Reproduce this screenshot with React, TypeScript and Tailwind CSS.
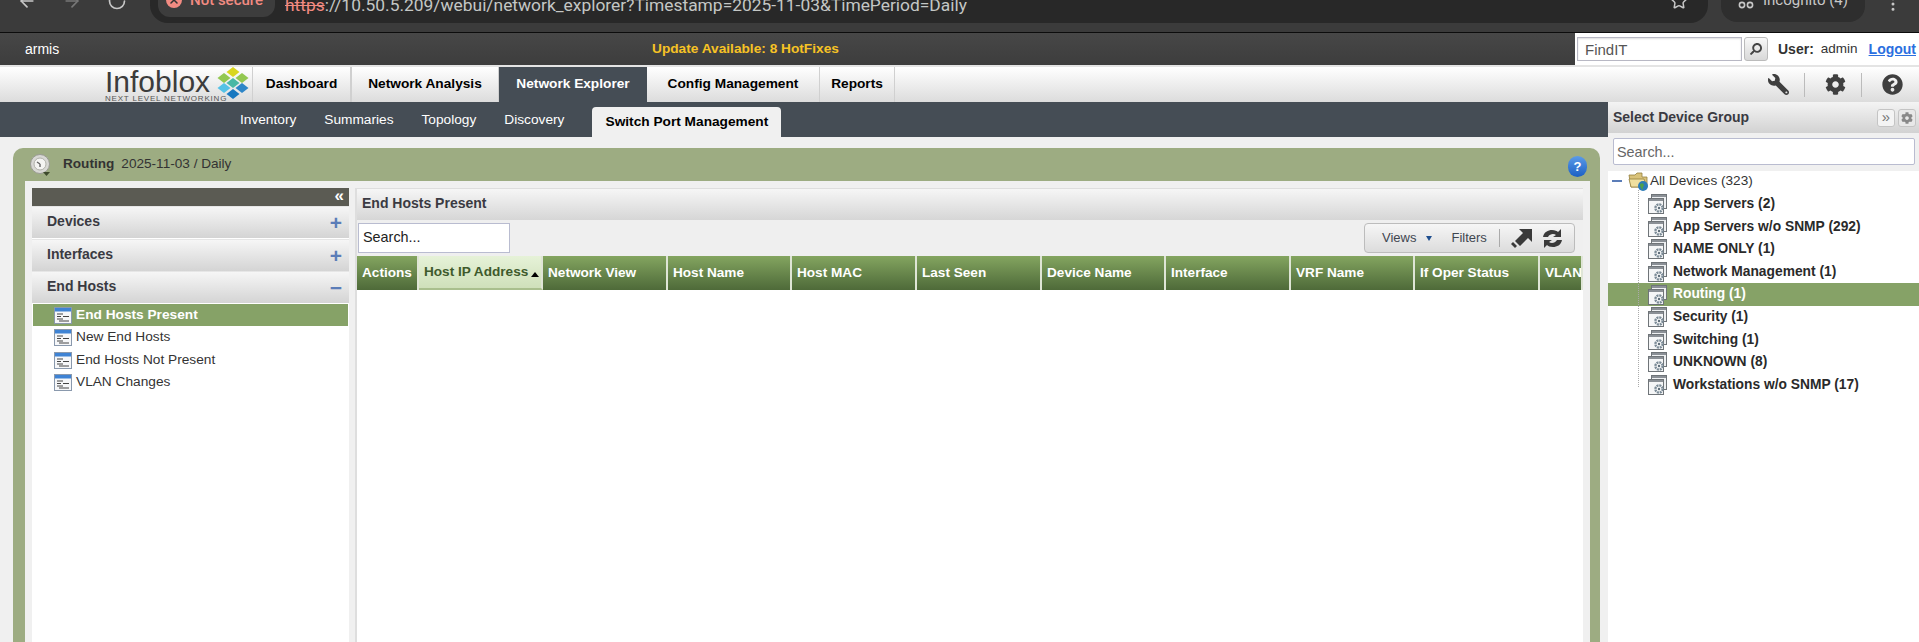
import { FaCog, FaQuestionCircle, FaSearch, FaWrench } from "react-icons/fa";
import { ArrowLeft, ArrowRight, EllipsisVertical, RotateCw, Star, X } from "lucide-react";

const navTabs = [
  { label: "Dashboard", width: "w-[99px]", border: true },
  { label: "Network Analysis", width: "w-[148px]", border: true },
  { label: "Network Explorer", width: "w-[148px]", active: true },
  { label: "Config Management", width: "w-[172px]" },
  { label: "Reports", width: "w-[76px]", border: true },
];

const subTabs = ["Inventory", "Summaries", "Topology", "Discovery"];

const columns = [
  { label: "Actions", width: "w-[62px]" },
  { label: "Host IP Address", width: "w-[124px]", sorted: true },
  { label: "Network View", width: "w-[125px]" },
  { label: "Host Name", width: "w-[124px]" },
  { label: "Host MAC", width: "w-[125px]" },
  { label: "Last Seen", width: "w-[125px]" },
  { label: "Device Name", width: "w-[124px]" },
  { label: "Interface", width: "w-[125px]" },
  { label: "VRF Name", width: "w-[124px]" },
  { label: "If Oper Status", width: "w-[125px]" },
  { label: "VLAN", width: "flex-1" },
];

const reports = ["End Hosts Present", "New End Hosts", "End Hosts Not Present", "VLAN Changes"];

const groups = [
  "App Servers (2)",
  "App Servers w/o SNMP (292)",
  "NAME ONLY (1)",
  "Network Management (1)",
  "Routing (1)",
  "Security (1)",
  "Switching (1)",
  "UNKNOWN (8)",
  "Workstations w/o SNMP (17)",
];

function Logo() {
  return (
    <div className="flex w-[148px] pl-[1px] h-full shrink-0">
      <div className="flex flex-col w-[110px] shrink-0">
        <span className="text-[30px] leading-[26px] mt-[2px] text-[#3c3c3c]">Infoblox</span>
        <span className="text-[8px] leading-[7px] tracking-[0.8px] text-[#555] whitespace-nowrap">NEXT LEVEL NETWORKING</span>
      </div>
      <svg viewBox="0 0 36 32" className="w-[36px] h-[32px] shrink-0">
        <polygon points="18,0 24.5,5 18,10 11.5,5" fill="#d9d61f" />
        <polygon points="9,6 15.5,11 9,16 2.5,11" fill="#93c851" />
        <polygon points="27,6 33.5,11 27,16 20.5,11" fill="#93c851" />
        <polygon points="18,11 24.5,16 18,21 11.5,16" fill="#49b8a5" />
        <polygon points="9,16 15.5,21 9,26 2.5,21" fill="#55c2e6" />
        <polygon points="27,16 33.5,21 27,26 20.5,21" fill="#2e86c8" />
        <polygon points="18,22 24.5,27 18,32 11.5,27" fill="#1878c0" />
      </svg>
    </div>
  );
}

function ClockIcon() {
  return (
    <svg viewBox="0 0 22 24" className="w-[22px] h-[24px] shrink-0">
      <circle cx="10" cy="11" r="9.5" fill="#d8d8d4" stroke="#9a9a94" />
      <circle cx="10" cy="11" r="6" fill="#f4f4f2" stroke="#b0b0aa" />
      <path d="M10 11 L7 9 M10 11 L10 14" stroke="#666" strokeWidth="1.4" />
      <polygon points="13,19 20,19 16.5,23" fill="#3d4a2c" />
    </svg>
  );
}

function ReportIcon() {
  return (
    <svg viewBox="0 0 18 17" className="w-[18px] h-[17px] shrink-0">
      <rect x="0.5" y="0.5" width="17" height="16" fill="#f6f7f9" stroke="#8a99ad" />
      <rect x="1" y="1" width="16" height="3.5" fill="#3f83d4" />
      <path d="M3 7 H9 M9 9.5 H15 M3 9.5 H7 M3 12 H9 M5 14 H15" stroke="#444" strokeWidth="1" />
    </svg>
  );
}

function GroupIcon() {
  return (
    <svg viewBox="0 0 20 20" className="w-[20px] h-[20px] shrink-0">
      <rect x="3.5" y="0.5" width="15" height="14" fill="#eef0f2" stroke="#6f7478" />
      <rect x="4" y="1" width="14" height="2" fill="#8b9096" />
      <rect x="0.5" y="4.5" width="15" height="15" fill="#f5f6f7" stroke="#6f7478" />
      <rect x="1" y="5" width="14" height="2" fill="#8b9096" />
      <circle cx="11" cy="14" r="3.6" fill="none" stroke="#7a8a96" strokeWidth="2.4" strokeDasharray="2 0.8" />
      <circle cx="11" cy="14" r="1.2" fill="#5f6e7a" />
    </svg>
  );
}

function FolderGlobe() {
  return (
    <svg viewBox="0 0 21 21" className="w-[21px] h-[21px] shrink-0">
      <path d="M1 4 H7 L9 2 H14 V6 H19 V16 H3 Z" fill="#d9c27a" stroke="#94803f" strokeWidth="0.8" />
      <path d="M1 8 H16 L19 16 H3 Z" fill="#efdf9f" stroke="#94803f" strokeWidth="0.8" />
      <circle cx="15" cy="15" r="5" fill="#2c7cb8" />
      <path d="M12 13 Q15 11 16 14 Q14 17 15 19 Q12 17 12 13Z" fill="#4fa04a" />
    </svg>
  );
}

function ExportIcon() {
  return (
    <svg viewBox="0 0 22 20" className="w-[22px] h-[20px] shrink-0">
      <polygon points="8,1 21,1 21,14 17,10 9,18 4,13 12,5" fill="#3a3a3a" />
      <polygon points="2,14 6,18 4,20 0,16" fill="#3a3a3a" />
    </svg>
  );
}

function RefreshIcon() {
  return (
    <svg viewBox="0 0 21 19" className="w-[21px] h-[19px] shrink-0">
      <path d="M1 8 C2 3 6 1 10 1 C13 1 15 2 16 3 L19 0 V8 H11 L14 6 C12 4.500 8 4.500 6 8 Z" fill="#3a3a3a" />
      <path d="M20 11 C19 16 15 18 11 18 C8 18 6 17 5 16 L2 19 V11 H10 L7 13 C9 14.500 13 14.500 15 11 Z" fill="#3a3a3a" />
    </svg>
  );
}

function Accordion({ label, open }: { label: string; open?: boolean }) {
  return (
    <div className="h-[32px] mb-[0.6px] flex items-start justify-between pl-[15px] pr-[7px] bg-linear-to-b from-[#f6f6f6] to-[#d4d4d4] border-t border-[#e6e6e6]">
      <span className="text-[14px] leading-[29px] font-bold text-[#3a3a42]">{label}</span>
      <span className="text-[21px] leading-[32px] font-bold text-[#5b7db8]">{open ? "−" : "+"}</span>
    </div>
  );
}

export default function App() {
  return (
    <div className="w-[1919px] h-[642px] overflow-hidden flex flex-col bg-[#f0f0f0] font-['Liberation_Sans',Arial,sans-serif]">
      {/* browser toolbar, cut off by the top of the capture */}
      <div className="h-[33px] shrink-0 flex items-start bg-[#3b3b3b] border-b border-[#0c0c0c] overflow-hidden">
        <div className="w-[150px] shrink-0 flex pl-[17px] gap-[25px] -mt-[9px] text-[#c7c7c7]">
          <ArrowLeft size={20} />
          <ArrowRight size={20} className="text-[#777]" />
          <RotateCw size={20} />
        </div>
        <div className="w-[1558px] h-[33px] -mt-[10px] shrink-0 flex rounded-b-[18px] bg-[#282828] pl-[8px] pr-[20px] justify-between">
          <div className="flex font-['Roboto',sans-serif] text-[17.4px] leading-[20px]">
            <div className="w-[117px] h-[27px] rounded-b-[12px] bg-[#3d3d3d] flex pl-[8px] gap-[8px] text-[#f28b82] text-[15px] font-medium">
              <span className="w-[16px] h-[16px] mt-[2px] rounded-full bg-[#f28b82] flex items-center justify-center shrink-0">
                <X size={12} className="text-[#333]" strokeWidth={3} />
              </span>
              Not secure
            </div>
            <span className="ml-[10px] pt-[5px] text-[#f28b82] line-through">https</span>
            <span className="pt-[5px] text-[#c4c7c5]">://10.50.5.209/webui/network_explorer?Timestamp=2025-11-03&amp;TimePeriod=Daily</span>
          </div>
          <Star size={18} className="text-[#c7c7c7] mt-[2px]" />
        </div>
        <div className="ml-[13px] w-[144px] h-[32px] -mt-[10px] rounded-b-[16px] bg-[#2e2e2e] flex pl-[16px] gap-[8px] text-[#c7c7c7] text-[15px] leading-[20px] font-['Roboto',sans-serif]">
          <svg viewBox="0 0 18 14" className="w-[18px] h-[14px] mt-[5px] shrink-0">
            <path d="M3 1 H15 L16 5 H2 Z" fill="#c7c7c7" />
            <circle cx="5" cy="10" r="2.6" fill="none" stroke="#c7c7c7" strokeWidth="1.6" />
            <circle cx="13" cy="10" r="2.6" fill="none" stroke="#c7c7c7" strokeWidth="1.6" />
          </svg>
          Incognito (4)
        </div>
        <EllipsisVertical size={18} className="ml-[19px] -mt-[5px] text-[#c7c7c7]" />
      </div>

      {/* header */}
      <div className="h-[32px] shrink-0 flex bg-linear-to-b from-[#474747] to-[#3d3d3d]">
        <div className="flex-1 relative leading-[32px]">
          <span className="pl-[25px] text-[14px] text-white">armis</span>
          <span className="absolute left-[652px] top-0 text-[13.7px] font-bold text-[#f7c325]">Update Available: 8 HotFixes</span>
        </div>
        <div className="w-[344px] flex items-center bg-white pl-[2px]">
          <div className="w-[165px] h-[24px] border border-[#b8b8c4] shadow-[inset_0_1px_2px_#ddd] pl-[7px] leading-[23px] text-[#555] text-[15px]">
            FindIT
          </div>
          <div className="w-[24px] h-[24px] ml-[2px] rounded-[3px] border border-[#bbb] bg-linear-to-b from-[#f8f8f8] to-[#d8d8d8] flex items-center justify-center text-[#444]">
            <FaSearch size={12} className="-scale-x-100" />
          </div>
          <span className="ml-[10px] text-[14px] font-bold text-[#333]">User:</span>
          <span className="ml-[7px] text-[13.5px] text-[#333]">admin</span>
          <a className="ml-[11px] text-[14px] font-bold text-[#2a6fe0] underline">Logout</a>
        </div>
      </div>

      {/* main nav */}
      <div className="h-[37px] shrink-0 flex pl-[104px] pr-[16px] bg-linear-to-b from-[#ffffff] to-[#dcdcdc] border-t-[2px] border-[#e4e4e4]">
        <Logo />
        {navTabs.map((tab) => (
          <div
            key={tab.label}
            className={`${tab.width} shrink-0 flex items-center justify-center text-[13.7px] font-bold ${
              tab.active ? "bg-[#454d55] text-white" : "text-black"
            } ${tab.border ? "border-l border-r border-[#d0d0d0]" : ""}`}
          >
            {tab.label}
          </div>
        ))}
        <div className="flex-1 flex items-center justify-end text-[#3f3f3f]">
          <FaWrench size={21} className="mr-[15px] -scale-x-100" />
          <span className="w-[1px] h-[24px] bg-[#bbb]" />
          <FaCog size={21} className="ml-[20px] mr-[15px]" />
          <span className="w-[1px] h-[24px] bg-[#bbb]" />
          <FaQuestionCircle size={21} className="ml-[20px]" />
        </div>
      </div>

      {/* body: left the page, right the device group panel */}
      <div className="flex-1 flex min-h-0">
        <div className="w-[1608px] shrink-0 flex flex-col">
          <div className="h-[35px] shrink-0 flex items-end pl-[240px] bg-[#454d55] text-[13.7px]">
            {subTabs.map((tab) => (
              <span key={tab} className="mr-[28px] h-[35px] leading-[35px] text-white">
                {tab}
              </span>
            ))}
            <span className="h-[30px] w-[189px] rounded-t-[4px] bg-[#f0f0f0] text-center leading-[30px] font-bold text-black">
              Switch Port Management
            </span>
          </div>

          <div className="flex-1 min-h-0 pt-[11px] pl-[13px] pr-[8px]">
            <div className="h-full flex flex-col rounded-t-[10px] bg-[#9dac82] pl-[12px] pr-[10px]">
              <div className="h-[33px] shrink-0 flex items-center pl-[5px] pr-[3px]">
                <ClockIcon />
                <span className="ml-[11px] text-[13.6px] font-bold text-[#333]">Routing</span>
                <span className="ml-[7px] text-[13.6px] text-[#333]">2025-11-03 / Daily</span>
                <span className="ml-auto mt-[3px] w-[19px] h-[21px] rounded-full bg-linear-to-b from-[#5b9be8] to-[#1a5fc4] text-white text-[13px] font-bold text-center leading-[21px]">
                  ?
                </span>
              </div>

              <div className="flex-1 min-h-0 flex bg-[#f0f0f0] pt-[7px] pl-[7px] pr-[7px]">
                {/* left report menu */}
                <div className="w-[317px] shrink-0 flex flex-col bg-white">
                  <div className="h-[18px] shrink-0 bg-[#5b5b53] text-white text-right pr-[5px] text-[17px] leading-[15px] font-bold">
                    «
                  </div>
                  <Accordion label="Devices" />
                  <Accordion label="Interfaces" />
                  <Accordion label="End Hosts" open />
                  <div className="px-[1px]">
                    {reports.map((report, i) => (
                      <div
                        key={report}
                        className={`h-[22.5px] flex items-center gap-[4px] pl-[21px] text-[13.7px] ${
                          i === 0 ? "bg-[#86a267] text-white font-bold" : "text-[#333]"
                        }`}
                      >
                        <ReportIcon />
                        {report}
                      </div>
                    ))}
                  </div>
                </div>

                {/* end hosts table */}
                <div className="flex-1 min-w-0 ml-[6px] flex flex-col border-l-[2px] border-[#dedede] bg-white">
                  <div className="h-[32px] shrink-0 pl-[5px] bg-linear-to-b from-[#f6f6f6] to-[#d6d6d6] border-t border-[#dedede] text-[14px] font-bold leading-[29px] text-[#3a3a42]">
                    End Hosts Present
                  </div>
                  <div className="h-[36px] shrink-0 flex items-center justify-between pl-[1px] pr-[8px] bg-[#efefef]">
                    <div className="w-[152px] h-[30px] pl-[4px] border border-[#b9bcd0] bg-white text-[14.4px] leading-[27px] text-[#222]">
                      Search...
                    </div>
                    <div className="w-[211px] h-[30px] flex items-center rounded-[4px] border border-[#bcbcbc] bg-linear-to-b from-[#f6f6f6] to-[#dcdcdc] pl-[17px] text-[13px] text-[#3f4650]">
                      Views
                      <span className="ml-[10px] w-0 h-0 border-x-[3.5px] border-x-transparent border-t-[5px] border-t-[#1f4f8f]" />
                      <span className="ml-[19px]">Filters</span>
                      <span className="ml-[12px] w-[1px] h-[18px] bg-[#aaa]" />
                      <span className="ml-[11px] flex">
                        <ExportIcon />
                      </span>
                      <span className="ml-[9px] flex">
                        <RefreshIcon />
                      </span>
                    </div>
                  </div>
                  <div className="h-[34px] shrink-0 flex bg-[#efefef]">
                    {columns.map((col) => (
                      <div
                        key={col.label}
                        className={`${col.width} shrink-0 flex items-center pl-[5px] border-r-[2px] border-[#dfe5d6] text-[13.6px] font-bold whitespace-nowrap overflow-hidden ${
                          col.sorted
                            ? "bg-linear-to-b from-[#e6f2d8] to-[#cfe0ba] text-[#3e5a2c] border-b-[2px] border-b-[#a9bf8d]"
                            : "bg-linear-to-b from-[#84a560] to-[#4e6a39] text-white"
                        }`}
                      >
                        {col.label}
                        {col.sorted && (
                          <span className="ml-[3px] mt-[4px] w-0 h-0 border-x-[4px] border-x-transparent border-b-[5px] border-b-black" />
                        )}
                      </div>
                    ))}
                  </div>
                  <div className="flex-1 bg-white" />
                </div>
              </div>
            </div>
          </div>
        </div>

        {/* device group panel */}
        <div className="flex-1 min-w-0 flex flex-col bg-white">
          <div className="h-[31px] shrink-0 flex items-center justify-between pl-[5px] pr-[3px] bg-linear-to-b from-[#f4f4f4] to-[#d2d2d2]">
            <span className="text-[14px] font-bold text-[#3a3a42]">Select Device Group</span>
            <div className="flex gap-[3px]">
              <span className="w-[18px] h-[18px] rounded-[3px] border border-[#c4c4c4] bg-[#f4f4f4] text-[15px] leading-[14px] text-center text-[#777]">»</span>
              <span className="w-[18px] h-[18px] rounded-[3px] border border-[#c4c4c4] bg-[#e8e8e8] flex items-center justify-center text-[#888]">
                <FaCog size={12} />
              </span>
            </div>
          </div>
          <div className="h-[38px] shrink-0 pt-[5px] pl-[5px] pr-[4px] bg-[#f0f0f0]">
            <div className="h-[27px] rounded-[2px] border border-[#b9bcd0] bg-white pl-[3px] text-[14.4px] leading-[27px] text-[#666]">
              Search...
            </div>
          </div>
          <div className="relative">
            <div className="h-[20px] flex items-center pl-[4px] text-[13.6px] text-[#333]">
              <span className="w-[10px] h-[2px] bg-[#5b7db8]" />
              <span className="ml-[6px] flex">
                <FolderGlobe />
              </span>
              <span className="ml-[1px]">All Devices (323)</span>
            </div>
            <div className="absolute left-[30px] top-[19px] h-[197px] border-l border-dotted border-[#aaa]" />
            <div className="pt-[2px]">
              {groups.map((group, i) => (
                <div
                  key={group}
                  className={`h-[22.6px] flex items-center pl-[40px] gap-[5px] text-[13.8px] font-bold ${
                    i === 4 ? "bg-[#86a267] text-white" : "text-[#2a2a2a]"
                  }`}
                >
                  <GroupIcon />
                  {group}
                </div>
              ))}
            </div>
          </div>
        </div>
      </div>
    </div>
  );
}
